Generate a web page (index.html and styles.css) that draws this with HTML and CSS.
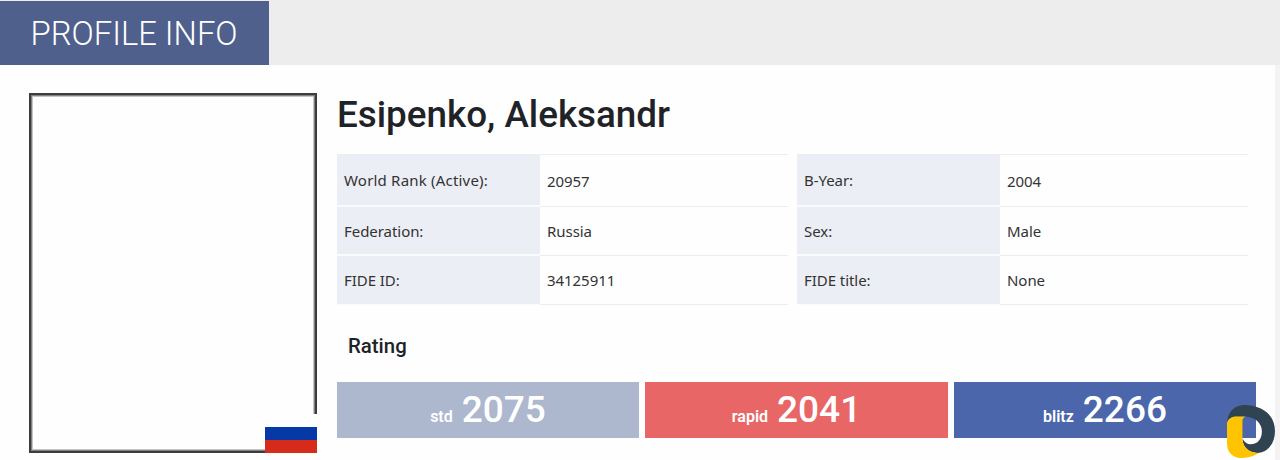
FILE: index.html
```html
<!DOCTYPE html>
<html lang="en">
<head>
    <meta charset="UTF-8">
    <meta name="viewport" content="width=device-width, initial-scale=1.0">
    <title>Profile Info</title>
    <link rel="stylesheet" href="styles.css">
</head>
<body>
    <header class="page-header">
        <h2 class="page-title">PROFILE INFO</h2>
    </header>
    <main class="profile">
        <div class="photo">
            <svg class="flag" width="52" height="39" viewBox="0 0 52 39">
                <rect width="52" height="13" fill="#fefefe"/>
                <rect y="13" width="52" height="13" fill="#0638a6"/>
                <rect y="26" width="52" height="13" fill="#d62b1b"/>
            </svg>
        </div>
        <div class="info">
            <h1 class="name">Esipenko, Aleksandr</h1>
            <div class="tables">
                <dl class="table">
                    <dt class="wide">World Rank (Active):</dt><dd>20957</dd>
                    <dt>Federation:</dt><dd>Russia</dd>
                    <dt>FIDE ID:</dt><dd>34125911</dd>
                </dl>
                <dl class="table">
                    <dt>B-Year:</dt><dd>2004</dd>
                    <dt>Sex:</dt><dd>Male</dd>
                    <dt>FIDE title:</dt><dd>None</dd>
                </dl>
            </div>
            <h3 class="rating-title">Rating</h3>
            <div class="ratings">
                <div class="rating std"><span>std</span><strong>2075</strong></div>
                <div class="rating rapid"><span>rapid</span><strong>2041</strong></div>
                <div class="rating blitz"><span>blitz</span><strong>2266</strong></div>
            </div>
        </div>
    </main>
    <svg class="badge" width="48" height="53" viewBox="0 0 143 158">
        <path fill="#304351" d="M0 54C3 20 20 2 50 0C108 0 143 32 143 78C143 115 120 143 90 143C66 142 46 128 46 100C52 112 60 117 70 117C92 117 104 100 104 78C104 54 84 36 55 34H25C10 36 2 44 0 54Z"/>
        <path fill="#ffc400" d="M0 54C2 44 10 36 25 34H55C48 37 46 42 46 50V104C50 128 68 143 95 143C80 153 60 158 42 158C15 158 0 140 0 115Z"/>
    </svg>
</body>
</html>
```
FILE: styles.css
```css
* { box-sizing: border-box; }

body {
    margin: 0;
    height: 460px;
    overflow: hidden;
    background: #f3f3f3;
    color: #1f2327;
    font-family: Roboto, sans-serif;
}

h1, h2, h3, dl, dd { margin: 0; }

.page-header {
    height: 65px;
    padding-top: 1px;
    background: #ededed;
}

.page-title {
    width: 269px;
    height: 64px;
    padding-left: 30.5px;
    background: #4f608d;
    color: #fff;
    font-size: 32.8px;
    font-weight: 300;
    line-height: 66px;
    white-space: nowrap;
}

.profile {
    display: flex;
    gap: 20px;
    width: 1275px;
    height: 395px;
    padding: 28px 19px 0 29px;
    background: #fefefe;
}

.photo {
    position: relative;
    flex: none;
    width: 288px;
    height: 360px;
    border: 2px solid #3c3c3e;
    box-shadow: inset 0 0 0 1px #808080, inset 0 0 0 2px #c4c4c4;
}

.flag {
    position: absolute;
    right: -2px;
    bottom: -2px;
}

.info {
    flex: 1;
}

.name {
    height: 61px;
    font-size: 36.8px;
    font-weight: 500;
    line-height: 44px;
    white-space: nowrap;
}

.tables {
    display: flex;
    gap: 9px;
}

.table {
    display: grid;
    grid-template-columns: 203px 248px;
    grid-template-rows: 52px 49px 49px;
    border-top: 1px solid #ededf1;
    color: #333;
    font-family: "Noto Sans", sans-serif;
    font-size: 15px;
    letter-spacing: -0.05px;
}

.table dt,
.table dd {
    display: flex;
    align-items: center;
    padding-left: 7px;
    border-bottom: 1px solid #ededf1;
}

.table dt {
    background: #eceef5;
    border-bottom: 2px solid #fbfbfd;
}

.table dt:last-of-type {
    border-bottom-width: 1px;
}

.table .wide {
    letter-spacing: 0.2px;
}

.rating-title {
    margin: 27px 0 22px 11px;
    font-size: 20.4px;
    font-weight: 500;
    line-height: 28px;
}

.ratings {
    display: grid;
    grid-template-columns: 302px 303px 302px;
    gap: 6px;
}

.rating {
    display: flex;
    justify-content: center;
    align-items: baseline;
    gap: 9px;
    height: 56px;
    color: #fff;
    font-size: 16px;
    font-weight: 500;
    line-height: 55px;
}

.rating span {
    font-weight: 600;
}

.rating strong {
    font-size: 37px;
    font-weight: 500;
}

.std { background: #adb7ce; }
.rapid { background: #e86666; }
.blitz { background: #4b66ab; }

.badge {
    position: absolute;
    left: 1227px;
    top: 405px;
}
```
